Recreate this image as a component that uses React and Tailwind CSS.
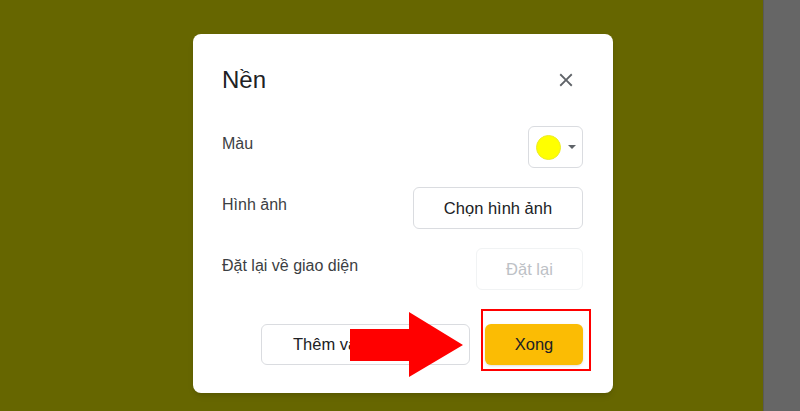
import React from "react";

const rows = [
  { label: "Màu", kind: "swatch" },
  { label: "Hình ảnh", kind: "pick" },
  { label: "Đặt lại về giao diện", kind: "reset" },
];

const CloseIcon = () => (
  <svg viewBox="0 0 24 24" className="w-[22px] h-[22px]" fill="#5f6368">
    <path d="M19 6.41 17.59 5 12 10.59 6.41 5 5 6.41 10.59 12 5 17.59 6.41 19 12 13.41 17.59 19 19 17.59 13.41 12z" />
  </svg>
);

const RowControl = ({ kind }) => {
  if (kind === "swatch") {
    return (
      <button className="w-[55px] h-[42px] rounded-[6px] border border-[#dadce0] bg-white flex items-center pl-[7px] gap-[7px]">
        <span className="w-[25px] h-[25px] rounded-full bg-[#ffff00] border border-[#ecec2a]" />
        <svg viewBox="0 0 10 5" className="w-[8px] h-[4px]" fill="#5f6368">
          <path d="M0 0h10L5 5z" />
        </svg>
      </button>
    );
  }
  if (kind === "pick") {
    return (
      <button className="w-[170px] h-[42px] rounded-[6px] border border-[#dadce0] bg-white text-[16.5px] text-[#202124]">
        Chọn hình ảnh
      </button>
    );
  }
  return (
    <button
      disabled
      className="w-[107px] h-[42px] rounded-[6px] border border-[#f1f3f4] bg-white text-[16.5px] text-[#bdc1c6]"
    >
      Đặt lại
    </button>
  );
};

export default function App() {
  return (
    <div
      className="relative w-[800px] h-[411px] flex overflow-hidden"
      style={{ fontFamily: '"Liberation Sans", Arial, sans-serif' }}
    >
      {/* page behind the dialog */}
      <div className="flex-1 bg-[#666600] pl-[193px] pt-[34px]">
        <div className="w-[420px] h-[359px] bg-white rounded-[8px] shadow-md pt-[30px] pl-[29px] pr-[30px] pb-[28px] flex flex-col">
          <div className="flex items-center justify-between h-[32px]">
            <h2 className="text-[24px] leading-[32px] text-[#202124]">Nền</h2>
            <span className="mr-[6px] flex">
              <CloseIcon />
            </span>
          </div>

          <div className="mt-[30px] flex flex-col gap-[19px]">
            {rows.map((row) => (
              <div key={row.label} className="flex items-center justify-between h-[42px]">
                <span className="text-[16px] leading-[24px] text-[#3c4043] pb-[6px]">
                  {row.label}
                </span>
                <RowControl kind={row.kind} />
              </div>
            ))}
          </div>

          <div className="mt-auto flex justify-end gap-[15px]">
            <button className="w-[209px] h-[41px] rounded-[6px] border border-[#dadce0] bg-white text-[16.5px] text-[#202124]">
              Thêm vào giao diện
            </button>
            <button className="w-[98px] h-[41px] rounded-[6px] bg-[#fbbc04] shadow-sm text-[16.5px] text-[#202124]">
              Xong
            </button>
          </div>
        </div>
      </div>
      <div className="w-[37px] bg-[#666666] border-l border-[#595959]" />

      {/* annotations drawn over the screenshot */}
      <svg
        viewBox="0 0 113 65"
        className="absolute left-[350px] top-[312px] w-[113px] h-[65px]"
      >
        <polygon points="0,17 59,17 59,0 113,33 59,65 59,49 0,49" fill="#ff0000" />
      </svg>
      <div className="absolute left-[481px] top-[309px] w-[110px] h-[62px] border-2 border-[#ff0000]" />
    </div>
  );
}
